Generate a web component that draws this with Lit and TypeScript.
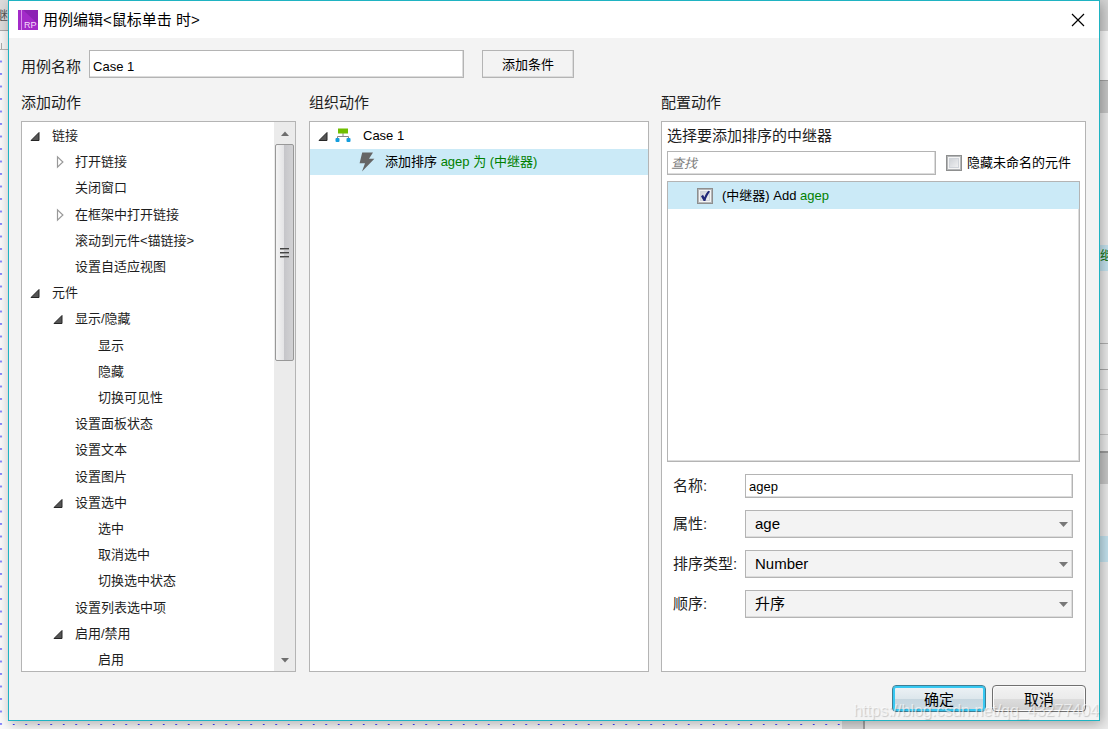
import { LitElement, html, css, svg, nothing } from "lit";
import { customElement, property, state } from "lit/decorators.js";
import { classMap } from "lit/directives/class-map.js";

type Arrow = "open" | "closed" | "none";

interface ActionNode {
  label: string;
  level: 0 | 1 | 2;
  arrow: Arrow;
}

const ACTIONS: ActionNode[] = [
  { label: "链接", level: 0, arrow: "open" },
  { label: "打开链接", level: 1, arrow: "closed" },
  { label: "关闭窗口", level: 1, arrow: "none" },
  { label: "在框架中打开链接", level: 1, arrow: "closed" },
  { label: "滚动到元件<锚链接>", level: 1, arrow: "none" },
  { label: "设置自适应视图", level: 1, arrow: "none" },
  { label: "元件", level: 0, arrow: "open" },
  { label: "显示/隐藏", level: 1, arrow: "open" },
  { label: "显示", level: 2, arrow: "none" },
  { label: "隐藏", level: 2, arrow: "none" },
  { label: "切换可见性", level: 2, arrow: "none" },
  { label: "设置面板状态", level: 1, arrow: "none" },
  { label: "设置文本", level: 1, arrow: "none" },
  { label: "设置图片", level: 1, arrow: "none" },
  { label: "设置选中", level: 1, arrow: "open" },
  { label: "选中", level: 2, arrow: "none" },
  { label: "取消选中", level: 2, arrow: "none" },
  { label: "切换选中状态", level: 2, arrow: "none" },
  { label: "设置列表选中项", level: 1, arrow: "none" },
  { label: "启用/禁用", level: 1, arrow: "open" },
  { label: "启用", level: 2, arrow: "none" },
];

const FIELDS = [
  { id: "property", label: "属性:", options: ["age"] },
  { id: "sort-type", label: "排序类型:", options: ["Number"] },
  { id: "order", label: "顺序:", options: ["升序"] },
];

const arrowIcon = (arrow: Arrow) =>
  arrow === "none"
    ? nothing
    : html`<svg width="12" height="14" viewBox="0 0 12 14" aria-hidden="true">
        ${arrow === "open"
          ? svg`<path d="M10 3.5V11.5H2Z" fill="#555" stroke="#262626" stroke-linejoin="round"/>`
          : svg`<path d="M5.5 1.8V12.2L10.9 7Z" fill="#fff" stroke="#999" stroke-width="1.2"/>`}
      </svg>`;

const base = css`
  * {
    box-sizing: border-box;
  }
  button,
  input,
  select {
    font-family: inherit;
    color: #000;
    margin: 0;
    border-radius: 0;
    outline: none;
  }
`;

@customElement("check-box")
export class CheckBox extends LitElement {
  @property() label = "";
  @property() accent = "";
  @property({ type: Boolean }) checked = false;

  static styles = [
    base,
    css`
      :host {
        display: block;
      }
      .label {
        display: flex;
        align-items: center;
        font-size: 13px;
        line-height: 18px;
        color: #000;
        white-space: nowrap;
      }
      .box {
        display: grid;
        flex: none;
        width: 16px;
        height: 16px;
      }
      .box > * {
        grid-area: 1 / 1;
      }
      .input {
        appearance: none;
        width: 16px;
        height: 16px;
        border: 1px solid #8e8f8f;
        background: linear-gradient(135deg, #c4c8ce, #fafafa);
        box-shadow: inset 0 0 0 1px #b4b6b8, inset 0 0 0 2px #f4f4f4, inset 0 0 0 3px #d0d4da;
      }
      .tick {
        pointer-events: none;
      }
      .text {
        padding-left: 5px;
      }
      .text.wide {
        padding-left: 9px;
      }
      .accent {
        color: #008000;
      }
    `,
  ];

  render() {
    return html`<label class="label">
      <span class="box">
        <input
          class="input"
          type="checkbox"
          .checked=${this.checked}
          @change=${(e: Event) => (this.checked = (e.target as HTMLInputElement).checked)}
        />
        ${this.checked
          ? html`<svg class="tick" width="16" height="16" viewBox="0 0 16 16" aria-hidden="true">
              <path d="M4 8.2L6 6.8L7.4 9.2C8.4 6.6 9.8 4.4 11.4 2.8L13 3.6C11 6.4 9.4 9.4 8.4 13H6.6Z" fill="#212878" />
            </svg>`
          : nothing}
      </span>
      <span class=${classMap({ text: true, wide: this.accent !== "" })}
        >${this.label}${this.accent ? html` <span class="accent">${this.accent}</span>` : nothing}</span
      >
    </label>`;
  }
}

@customElement("app-root")
export class AppRoot extends LitElement {
  @state() private caseName = "Case 1";
  @state() private sortName = "agep";

  static styles = [
    base,
    css`
      :host {
        display: grid;
        grid-template: minmax(0, 1fr) 8px / 8px minmax(0, 1fr) 8px;
        height: 100vh;
        overflow: hidden;
        position: relative;
        font-family: "Liberation Sans", "Noto Sans CJK SC", sans-serif;
        font-size: 15px;
        line-height: 20px;
        color: #1e1e1e;
        background: #fafafa;
      }

      /* Editor window showing around the dialog */
      .left-edge {
        grid-area: 1 / 1 / 3 / 2;
        overflow: hidden;
        display: flex;
        flex-direction: column;
      }
      .tab {
        height: 31px;
        padding-top: 6px;
        background: #dcdcdc;
        border-bottom: 1px solid #a8a8a8;
        font-size: 13px;
        color: #555;
        direction: rtl;
        white-space: nowrap;
      }
      .ruler {
        height: 19px;
        background: linear-gradient(90deg, transparent 1px, #aaa 1px 2px, transparent 2px) 0 100% / 8px 6px no-repeat, #f6f6f6;
        border-bottom: 1px solid #b4b4b4;
      }
      .dots {
        flex: 1;
      }
      .dots-left {
        width: 100%;
        height: 100%;
        display: block;
      }
      .right-edge {
        grid-area: 1 / 3 / 3 / 4;
        overflow: hidden;
        background: linear-gradient(
          #d4d4d4 31px,
          #fbfbfb 31px 80px,
          #a4a4a4 80px 81px,
          #c8c8c8 81px 113px,
          #ececec 113px 245px,
          #c4e4f0 245px 271px,
          #ececec 271px 343px,
          #b0b0b0 343px 344px,
          #ececec 344px 369px,
          #a8a8a8 369px 370px,
          #ececec 370px 389px,
          #c4c4c4 389px 390px,
          #ececec 390px 434px,
          #c4c4c4 434px 435px,
          #ececec 435px 451px,
          #9c9c9c 451px 453px,
          #c8c8c8 453px 484px,
          #ececec 484px 536px,
          #c4e4f0 536px 562px,
          #ececec 562px
        );
        padding-top: 246px;
        font-size: 13px;
        color: #087008;
        white-space: nowrap;
      }
      .bottom-edge {
        grid-area: 2 / 2;
        display: flex;
      }
      .canvas-dots {
        flex: 1;
        min-width: 0;
      }
      .gutter {
        width: 23px;
        background: #dcdcdc;
        border-right: 2px solid #a4a4a4;
      }
      .side {
        width: 235px;
        background: #ececec;
      }

      .dialog {
        grid-area: 1 / 2;
        position: relative;
        z-index: 1;
        display: flex;
        flex-direction: column;
        min-height: 0;
        border: 1px solid #1fb3c2;
        background: #f3f3f3;
        box-shadow: 2px 3px 12px rgba(0, 0, 0, 0.3);
      }
      .title-bar {
        display: flex;
        align-items: center;
        height: 37px;
        padding: 0 14px 0 9px;
        gap: 5px;
        background: #fff;
      }
      .title {
        flex: 1;
        margin: 0;
        font-size: 15px;
        font-weight: 400;
        color: #000;
      }
      .close {
        display: grid;
        padding: 0;
        border: 0;
        background: none;
      }
      .body {
        flex: 1;
        min-height: 0;
        display: flex;
        flex-direction: column;
        padding: 12px 13px 8px 12px;
      }
      .name-row {
        display: flex;
        align-items: center;
        height: 28px;
      }
      .name-label {
        padding: 6px 8px 0 0;
      }
      .text-input {
        height: 24px;
        padding: 0 3px;
        border: 1px solid #b4b4b4;
        box-shadow: inset -1px -1px #dcdcdc;
        background: #fff;
        font-size: 13px;
      }
      .case-input {
        width: 375px;
        height: 28px;
        padding-top: 5px;
      }
      .condition {
        width: 92px;
        height: 28px;
        margin-left: 18px;
        padding: 0 0 2px;
        border: 1px solid #b4b4b4;
        box-shadow: inset -1px -1px #dcdcdc;
        background: #f3f3f3;
        font-size: 13px;
      }
      .columns {
        flex: 1;
        min-height: 0;
        display: grid;
        grid-template-columns: 276fr 340fr 425fr;
        gap: 12px;
        padding-top: 15px;
      }
      .column {
        display: flex;
        flex-direction: column;
        min-width: 0;
        min-height: 0;
      }
      .heading {
        margin: 0;
        padding-bottom: 8px;
        font-size: 15px;
        font-weight: 400;
      }
      .panel {
        flex: 1;
        min-height: 0;
        border: 1px solid #b4b4b4;
        background: #fff;
        overflow: hidden;
      }

      .actions {
        display: flex;
        margin-right: 1px;
      }
      .tree {
        flex: 1;
        display: grid;
        grid-auto-rows: 1fr;
        margin: 0 0 -2px;
        padding: 1px 0 0;
        list-style: none;
        font-size: 13px;
      }
      .node {
        display: flex;
        align-items: center;
        padding-left: 7px;
        white-space: nowrap;
      }
      .node.level-1 {
        padding-left: 30px;
      }
      .node.level-2 {
        padding-left: 53px;
      }
      .twist {
        display: flex;
        flex: none;
        width: 23px;
      }
      .scrollbar {
        width: 21px;
        display: flex;
        flex-direction: column;
        align-items: center;
        background: #ebebeb;
      }
      .scroll-button {
        display: grid;
        place-items: center;
        width: 100%;
        height: 22px;
        padding: 0;
        border: 0;
        background: none;
      }
      .track {
        flex: 1;
        width: 19px;
      }
      .thumb {
        display: grid;
        place-items: center;
        height: 43%;
        border: 1px solid #989898;
        border-radius: 2px;
        background: linear-gradient(90deg, #f4f4f4, #e4e4e6 45%, #c6c6ca 50%, #d2d2d4);
      }

      .case-row,
      .action-row {
        display: flex;
        align-items: center;
        height: 27px;
        padding-left: 7px;
        font-size: 13px;
        color: #000;
        white-space: nowrap;
      }
      .case-row {
        gap: 6px;
      }
      .case-row .twist {
        width: 12px;
      }
      .case-name {
        padding-left: 6px;
      }
      .action-row {
        height: 26px;
        padding-left: 49px;
        gap: 10px;
        background: #cbeaf7;
      }
      .value {
        color: #008000;
      }

      .config {
        display: flex;
        flex-direction: column;
        padding: 4px 5px 0;
      }
      .prompt {
        margin: 0;
        padding-bottom: 5px;
      }
      .filter {
        display: flex;
        align-items: center;
        padding-right: 9px;
        gap: 10px;
      }
      .search {
        flex: 1;
        min-width: 0;
      }
      .search::placeholder {
        color: #808080;
        opacity: 1;
        font-style: italic;
      }
      .targets {
        flex: 1;
        min-height: 0;
        margin: 6px 0 12px;
        border: 1px solid #b4b4b4;
        box-shadow: inset -1px -1px #dcdcdc;
      }
      .target {
        display: flex;
        align-items: center;
        height: 27px;
        padding-left: 29px;
        background: #cbeaf7;
      }
      .form {
        display: grid;
        grid-template-columns: 72px minmax(0, 1fr);
        row-gap: 12px;
        align-items: center;
        padding: 0 7px 53px 6px;
        white-space: nowrap;
      }
      .drop {
        display: grid;
        align-items: center;
      }
      .drop > * {
        grid-area: 1 / 1;
      }
      .select {
        appearance: none;
        height: 28px;
        padding: 0 9px 2px;
        border: 1px solid #b4b4b4;
        box-shadow: inset -1px -1px #dcdcdc;
        background: #f3f3f3;
        font-size: 15px;
      }
      .drop-arrow {
        justify-self: end;
        margin-right: 5px;
        pointer-events: none;
      }

      .footer {
        display: flex;
        justify-content: flex-end;
        gap: 6px;
        padding-top: 13px;
      }
      .command {
        width: 94px;
        height: 27px;
        padding: 0;
        border: 1px solid #707070;
        border-radius: 4px;
        background: linear-gradient(#f3f3f3, #ebebeb 50%, #dddddd 50%, #cfcfcf);
        box-shadow: inset 0 0 0 1px #fcfcfc;
        font-size: 15px;
      }
      .command.primary {
        border-color: #3c7f96;
        background: linear-gradient(#eef3f6, #dde7ec 50%, #c6d6df 50%, #cbdbe3);
        box-shadow: inset 0 0 0 2px #37c8f2;
      }
      .watermark {
        position: absolute;
        right: 9px;
        bottom: 8px;
        z-index: 2;
        font-size: 16px;
        color: rgba(255, 255, 255, 0.6);
        text-shadow: 1px 1px 1px rgba(0, 0, 0, 0.18);
        pointer-events: none;
      }
    `,
  ];

  private renderActions() {
    return html`<section class="column">
      <h2 class="heading">添加动作</h2>
      <div class="panel actions">
        <ul class="tree">
          ${ACTIONS.map(
            (n) => html`<li class=${classMap({ node: true, [`level-${n.level}`]: true })}>
              <span class="twist">${arrowIcon(n.arrow)}</span>${n.label}
            </li>`
          )}
        </ul>
        <div class="scrollbar">
          <button class="scroll-button" aria-label="向上滚动">
            <svg width="8" height="5" viewBox="0 0 8 5"><path d="M0 5L4 0.5L8 5Z" fill="#6e6e6e" /></svg>
          </button>
          <div class="track">
            <div class="thumb">
              <svg width="9" height="10" viewBox="0 0 9 10">
                <path d="M0 0.5H9M0 4.5H9M0 8.5H9" stroke="#444" />
                <path d="M0 1.5H9M0 5.5H9M0 9.5H9" stroke="#999" />
              </svg>
            </div>
          </div>
          <button class="scroll-button" aria-label="向下滚动">
            <svg width="8" height="5" viewBox="0 0 8 5"><path d="M0 0L4 4.5L8 0Z" fill="#6e6e6e" /></svg>
          </button>
        </div>
      </div>
    </section>`;
  }

  private renderOrganize() {
    return html`<section class="column">
      <h2 class="heading">组织动作</h2>
      <div class="panel">
        <div class="case-row">
          <span class="twist">${arrowIcon("open")}</span>
          <svg width="16" height="15" viewBox="0 0 16 15" aria-hidden="true">
            <path d="M8 5V8M2.5 11V8.5H13.5V11" fill="none" stroke="#888" />
            <rect x="3" y="0.5" width="10" height="5" fill="#70bf00" />
            <rect x="0.5" y="10" width="4" height="4" rx="1" fill="#129ddd" />
            <rect x="11.5" y="10" width="4" height="4" rx="1" fill="#129ddd" />
          </svg>
          <span class="case-name">${this.caseName}</span>
        </div>
        <div class="action-row">
          <svg width="16" height="20" viewBox="0 0 16 20" aria-hidden="true">
            <path d="M3.2 0.5H14L10 6.8H15.4L3 19.5L6 11.2H0.6Z" fill="#666" />
          </svg>
          <span>添加排序 <span class="value">agep 为 (中继器)</span></span>
        </div>
      </div>
    </section>`;
  }

  private renderConfigure() {
    return html`<section class="column">
      <h2 class="heading">配置动作</h2>
      <div class="panel config">
        <p class="prompt">选择要添加排序的中继器</p>
        <div class="filter">
          <input class="text-input search" type="text" placeholder="查找" aria-label="查找" />
          <check-box label="隐藏未命名的元件"></check-box>
        </div>
        <div class="targets">
          <div class="target"><check-box label="(中继器) Add" accent="agep" checked></check-box></div>
        </div>
        <div class="form">
          <label for="sort-name">名称:</label>
          <input
            id="sort-name"
            class="text-input"
            type="text"
            .value=${this.sortName}
            @input=${(e: Event) => (this.sortName = (e.target as HTMLInputElement).value)}
          />
          ${FIELDS.map(
            (f) => html`<label for=${f.id}>${f.label}</label>
              <div class="drop">
                <select id=${f.id} class="select">
                  ${f.options.map((o) => html`<option>${o}</option>`)}
                </select>
                <svg class="drop-arrow" width="9" height="5" viewBox="0 0 9 5" aria-hidden="true">
                  <path d="M0 0H9L4.5 5Z" fill="#787878" />
                </svg>
              </div>`
          )}
        </div>
      </div>
    </section>`;
  }

  render() {
    return html`
      <div class="left-edge" aria-hidden="true">
        <div class="tab">继</div>
        <div class="ruler"></div>
        <div class="dots">
          <svg class="dots-left">
            <defs>
              <pattern id="col" width="12.5" height="12.5" patternUnits="userSpaceOnUse">
                <rect x="0" y="11" width="2" height="1" fill="#1c1cff" />
              </pattern>
            </defs>
            <rect width="8" height="100%" fill="url(#col)" />
          </svg>
        </div>
      </div>
      <div class="right-edge" aria-hidden="true">继</div>
      <div class="bottom-edge" aria-hidden="true">
        <svg class="canvas-dots" height="8">
          <defs>
            <pattern id="row" width="12.5" height="8" patternUnits="userSpaceOnUse">
              <rect x="5" y="3" width="1.4" height="1" fill="#0000ff" />
            </pattern>
          </defs>
          <rect width="100%" height="8" fill="url(#row)" />
        </svg>
        <div class="gutter"></div>
        <div class="side"></div>
      </div>

      <main class="dialog" role="dialog" aria-labelledby="title">
        <header class="title-bar">
          <svg width="20" height="20" viewBox="0 0 20 20" aria-hidden="true">
            <rect width="20" height="20" fill="#a32bc9" />
            <path d="M5 0H20V14Z" fill="#8c22b4" />
            <rect x="3" width="1" height="20" fill="#d891ea" />
            <text x="6" y="18" font-size="9" font-family="Liberation Sans" fill="#f4dcfa">RP</text>
          </svg>
          <h1 class="title" id="title">用例编辑&lt;鼠标单击 时&gt;</h1>
          <button class="close" aria-label="关闭">
            <svg width="14" height="14" viewBox="0 0 14 14">
              <path d="M1 1L13 13M13 1L1 13" stroke="#000" stroke-width="1.2" />
            </svg>
          </button>
        </header>
        <div class="body">
          <div class="name-row">
            <label class="name-label" for="case-name">用例名称</label>
            <input
              id="case-name"
              class="text-input case-input"
              type="text"
              .value=${this.caseName}
              @input=${(e: Event) => (this.caseName = (e.target as HTMLInputElement).value)}
            />
            <button class="condition">添加条件</button>
          </div>
          <div class="columns">${this.renderActions()}${this.renderOrganize()}${this.renderConfigure()}</div>
          <footer class="footer">
            <button class="command primary">确定</button>
            <button class="command">取消</button>
          </footer>
        </div>
      </main>
      <span class="watermark">https://blog.csdn.net/qq_43277404</span>
    `;
  }
}
